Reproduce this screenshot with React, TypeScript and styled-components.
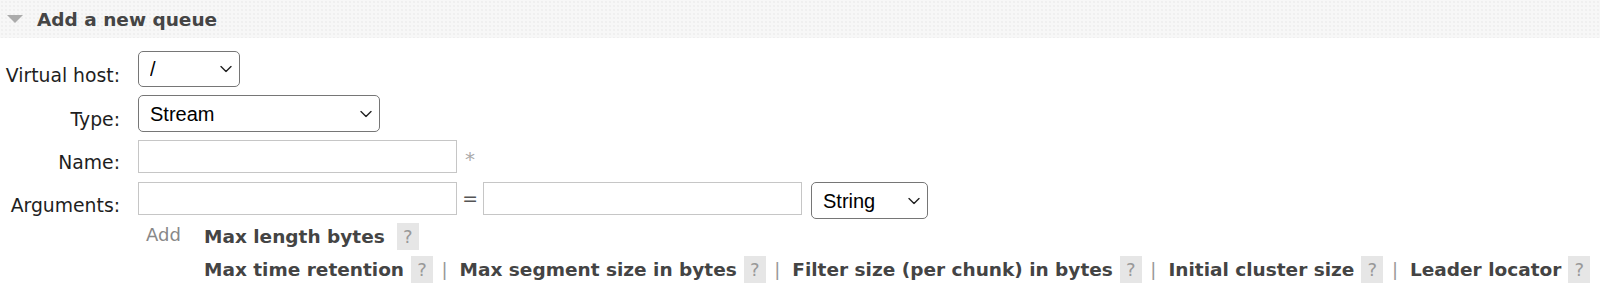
import React from "react";
import styled, { createGlobalStyle } from "styled-components";

const GlobalStyle = createGlobalStyle`
  html, body { margin: 0; padding: 0; background: #ffffff; }
  body {
    font-family: "DejaVu Sans", Verdana, sans-serif;
    font-size: 18.8px;
    color: #222;
    width: 1600px;
    overflow: hidden;
  }
`;

const Section = styled.section`
  display: flex;
  flex-direction: column;
`;

const Heading = styled.h2`
  margin: 0;
  height: 38px;
  display: flex;
  align-items: center;
  gap: 14px;
  padding-left: 7px;
  background-color: #f7f7f7;
  background-image: radial-gradient(circle, #efefef 0.7px, transparent 1px);
  background-size: 4px 4px;
  font-size: 18.5px;
  font-weight: bold;
  color: #454545;
`;

const Triangle = styled.svg`
  width: 16px;
  height: 8px;
  flex: none;
`;

const Form = styled.div`
  display: flex;
  flex-direction: column;
  padding-top: 13px;
`;

const Row = styled.div<{ $top: number; $align?: string }>`
  display: grid;
  grid-template-columns: 138px auto;
  justify-content: start;
  align-items: ${(p) => p.$align ?? "center"};
  margin-top: ${(p) => p.$top}px;
`;

const Label = styled.label<{ $pad?: number }>`
  text-align: right;
  padding-right: 18px;
  padding-top: ${(p) => p.$pad ?? 12}px;
  color: #1e1e1e;
  white-space: nowrap;
`;

const Field = styled.div`
  display: flex;
  align-items: center;
`;

const SelectWrap = styled.span<{ $w: number; $h: number; $gap?: number }>`
  position: relative;
  display: inline-flex;
  flex: none;
  width: ${(p) => p.$w}px;
  height: ${(p) => p.$h}px;
  margin-left: ${(p) => p.$gap ?? 0}px;
`;

const NativeSelect = styled.select`
  appearance: none;
  -webkit-appearance: none;
  box-sizing: border-box;
  width: 100%;
  height: 100%;
  margin: 0;
  padding: 0 28px 0 11px;
  border: 1px solid #767676;
  border-radius: 5px;
  background: #ffffff;
  font-family: "Liberation Sans", Arial, sans-serif;
  font-size: 20px;
  color: #000;
  outline: none;
`;

const Chevron = styled.svg`
  position: absolute;
  right: 8px;
  top: 50%;
  transform: translateY(-50%);
  width: 12px;
  height: 7px;
  pointer-events: none;
`;

const TextInput = styled.input`
  box-sizing: border-box;
  flex: none;
  width: 319px;
  height: 33px;
  margin: 0;
  padding: 0 4px;
  border: 1px solid #c6c6c6;
  background: #fff;
  font: inherit;
`;

const Required = styled.span`
  margin-left: 8px;
  margin-top: 4px;
  font-size: 20px;
  color: #aaa;
`;

const Stack = styled.div`
  display: flex;
  flex-direction: column;
`;

const InputLine = styled.div`
  display: flex;
  align-items: flex-start;
`;

const Equals = styled.span`
  width: 26px;
  flex: none;
  text-align: center;
  line-height: 33px;
  color: #555;
`;

const AddLine = styled.div`
  display: flex;
  align-items: center;
  height: 28px;
  margin-top: 3px;
`;

const AddText = styled.span`
  box-sizing: border-box;
  width: 66px;
  padding-left: 8px;
  margin-bottom: 4px;
  font-size: 18px;
  color: #888;
`;

const LinksLine = styled.div`
  display: flex;
  align-items: center;
  height: 27px;
  margin-top: 6px;
  padding-left: 66px;
  white-space: nowrap;
`;

const ArgLink = styled.span`
  font-size: 18.5px;
  font-weight: bold;
  color: #444;
  white-space: nowrap;
`;

const Help = styled.span<{ $gap?: number }>`
  display: inline-flex;
  align-items: center;
  justify-content: center;
  flex: none;
  width: 22px;
  height: 27px;
  margin-left: ${(p) => p.$gap ?? 7}px;
  background: #e6e6e6;
  font-size: 18px;
  color: #999;
`;

const Separator = styled.span`
  margin: 0 12px 0 8.5px;
  font-size: 18px;
  color: #999;
`;

const Select: React.FC<{ w: number; h: number; gap?: number; value: string; options: string[] }> = ({
  w,
  h,
  gap,
  value,
  options,
}) => (
  <SelectWrap $w={w} $h={h} $gap={gap}>
    <NativeSelect defaultValue={value}>
      {options.map((o) => (
        <option key={o} value={o}>
          {o}
        </option>
      ))}
    </NativeSelect>
    <Chevron viewBox="0 0 12 7">
      <path d="M1 1 L6 6 L11 1" fill="none" stroke="#222" strokeWidth="1.4" strokeLinecap="round" strokeLinejoin="round" />
    </Chevron>
  </SelectWrap>
);

const links = [
  "Max time retention",
  "Max segment size in bytes",
  "Filter size (per chunk) in bytes",
  "Initial cluster size",
  "Leader locator",
];

export default function App() {
  return (
    <>
      <GlobalStyle />
      <Section>
        <Heading>
          <Triangle viewBox="0 0 16 8">
            <polygon points="0,0 16,0 8,8" fill="#ababab" />
          </Triangle>
          Add a new queue
        </Heading>
        <Form>
          <Row $top={0}>
            <Label>Virtual host:</Label>
            <Field>
              <Select w={102} h={36} value="/" options={["/"]} />
            </Field>
          </Row>
          <Row $top={8}>
            <Label>Type:</Label>
            <Field>
              <Select w={242} h={37} value="Stream" options={["Classic", "Quorum", "Stream"]} />
            </Field>
          </Row>
          <Row $top={8}>
            <Label>Name:</Label>
            <Field>
              <TextInput type="text" />
              <Required>*</Required>
            </Field>
          </Row>
          <Row $top={9} $align="start">
            <Label $pad={13}>Arguments:</Label>
            <Stack>
              <InputLine>
                <TextInput type="text" />
                <Equals>=</Equals>
                <TextInput type="text" />
                <Select w={117} h={37} gap={9} value="String" options={["String", "Number", "Boolean", "List"]} />
              </InputLine>
              <AddLine>
                <AddText>Add</AddText>
                <ArgLink>Max length bytes</ArgLink>
                <Help $gap={12}>?</Help>
              </AddLine>
              <LinksLine>
                {links.map((l, i) => (
                  <React.Fragment key={l}>
                    {i > 0 && <Separator>|</Separator>}
                    <ArgLink>{l}</ArgLink>
                    <Help>?</Help>
                  </React.Fragment>
                ))}
              </LinksLine>
            </Stack>
          </Row>
        </Form>
      </Section>
    </>
  );
}
